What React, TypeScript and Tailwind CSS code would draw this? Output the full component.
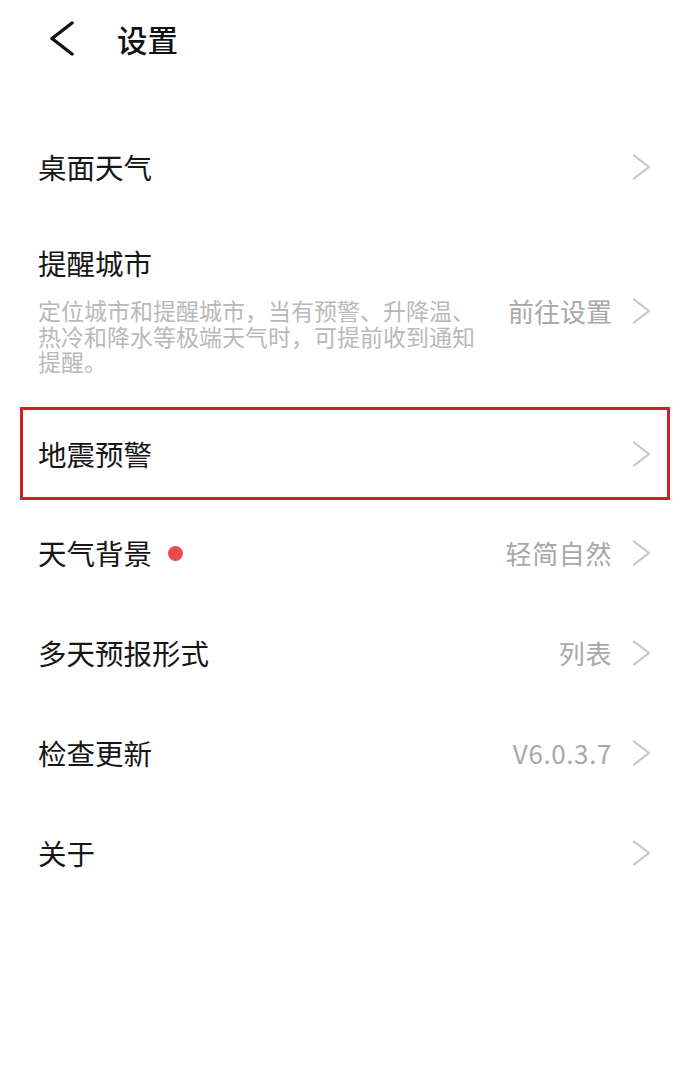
import React from "react";

const font = { fontFamily: '"Noto Sans CJK SC", "Noto Sans", sans-serif' };

const Chevron = () => (
  <svg width="19" height="26" viewBox="0 0 19 26" className="shrink-0">
    <path
      d="M2 1.5 L17 13 L2 24.5"
      fill="none"
      stroke="#c6c6c6"
      strokeWidth="2.2"
      strokeLinecap="round"
      strokeLinejoin="round"
    />
  </svg>
);

const Row = ({
  title,
  value,
  dot,
}: {
  title: string;
  value?: string;
  dot?: boolean;
}) => (
  <div className="flex h-[100px] items-center justify-between pl-[38px] pr-[39px]">
    <div className="flex items-center gap-[16px]">
      <span className="text-[28.5px] leading-[34px] text-[#161616]">{title}</span>
      {dot && <span className="h-[15px] w-[15px] rounded-full bg-[#ec4b4d]" />}
    </div>
    <div className="flex items-center gap-[20px]">
      {value && (
        <span className="text-[26px] leading-[32px] tracking-[0.6px] text-[#a8a8a8]">
          {value}
        </span>
      )}
      <Chevron />
    </div>
  </div>
);

const App = () => {
  return (
    <div className="h-[1080px] w-[690px] bg-white" style={font}>
      {/* header */}
      <div className="flex h-[78px] items-center pl-[49px]">
        <svg width="26" height="36" viewBox="0 0 26 36">
          <path
            d="M23 2 L3 17.5 L23 33"
            fill="none"
            stroke="#111"
            strokeWidth="3.4"
            strokeLinecap="round"
            strokeLinejoin="round"
          />
        </svg>
        <span className="ml-[42px] text-[30.5px] leading-[38px] font-medium text-[#111]">
          设置
        </span>
      </div>

      <div className="h-[39px]" />

      <Row title="桌面天气" />

      {/* reminder city */}
      <div className="h-[190px] pl-[38px] pr-[39px] pt-[29px]">
        <div className="text-[28.5px] leading-[34px] text-[#161616]">提醒城市</div>
        <div className="mt-[18px] flex items-start justify-between">
          <p className="w-[444px] text-[23px] leading-[25.5px] text-[#b9b9b9]">
            定位城市和提醒城市，当有预警、升降温、热冷和降水等极端天气时，可提前收到通知提醒。
          </p>
          <div className="mt-[-3px] flex items-center gap-[20px]">
            <span className="text-[26px] leading-[32px] text-[#a8a8a8]">前往设置</span>
            <Chevron />
          </div>
        </div>
      </div>

      {/* highlighted */}
      <div className="mx-[20px] mb-[3px] flex h-[93px] items-center justify-between border-[3px] border-[#cc2129] pl-[15px] pr-[16px]">
        <span className="text-[28.5px] leading-[34px] text-[#161616]">地震预警</span>
        <Chevron />
      </div>

      <Row title="天气背景" value="轻简自然" dot />
      <Row title="多天预报形式" value="列表" />
      <Row title="检查更新" value="V6.0.3.7" />
      <Row title="关于" />
    </div>
  );
};

export default App;
